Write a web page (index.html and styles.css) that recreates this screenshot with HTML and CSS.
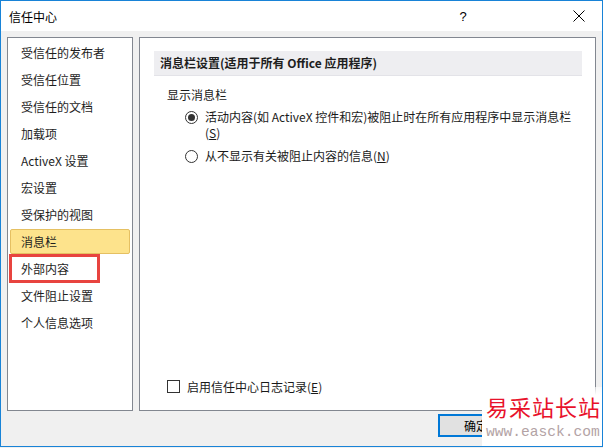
FILE: index.html
```html
<!DOCTYPE html>
<html>
<head>
<meta charset="utf-8">
<link rel="stylesheet" href="styles.css">
</head>
<body>
<div class="window">
  <div class="titlebar">
    <div class="title">信任中心</div>
    <div class="tb-btn help">?</div>
    <div class="tb-btn close">
      <svg width="12" height="12" viewBox="0 0 12 12"><path d="M0.5 0.5 L11.5 11.5 M11.5 0.5 L0.5 11.5" stroke="#000" stroke-width="1" fill="none"/></svg>
    </div>
  </div>
  <div class="main">
    <div class="nav">
      <div class="nav-item">受信任的发布者</div>
      <div class="nav-item">受信任位置</div>
      <div class="nav-item">受信任的文档</div>
      <div class="nav-item">加载项</div>
      <div class="nav-item">ActiveX 设置</div>
      <div class="nav-item">宏设置</div>
      <div class="nav-item">受保护的视图</div>
      <div class="nav-item active">消息栏</div>
      <div class="nav-item marked">外部内容<span class="redbox"></span></div>
      <div class="nav-item">文件阻止设置</div>
      <div class="nav-item">个人信息选项</div>
    </div>
    <div class="panel">
      <div class="section-head">消息栏设置(适用于所有 Office 应用程序)</div>
      <div class="group-label">显示消息栏</div>
      <div class="opt first">
        <span class="radio checked"></span>
        <span class="opt-text">活动内容(如 ActiveX 控件和宏)被阻止时在所有应用程序中显示消息栏<br>(<u>S</u>)</span>
      </div>
      <div class="opt second">
        <span class="radio"></span>
        <span class="opt-text">从不显示有关被阻止内容的信息(<u>N</u>)</span>
      </div>
      <div class="check-row">
        <span class="checkbox"></span>
        <span class="opt-text">启用信任中心日志记录(<u>E</u>)</span>
      </div>
    </div>
  </div>
  <div class="footer">
    <div class="btn">确定</div>
  </div>
  <div class="watermark">
    <div class="wm-cn">易采站长站</div>
    <div class="wm-en">www.easck.com</div>
  </div>
</div>
</body>
</html>
```
FILE: styles.css
```css
* { box-sizing: border-box; }
html, body { margin: 0; padding: 0; background: #f0f0f0; }
body {
  font-family: "Noto Sans CJK SC", "Noto Sans", sans-serif;
  font-size: 12px;
  color: #1a1a1a;
}
.window {
  position: relative;
  width: 603px;
  height: 447px;
  border: 1px solid #1883d7;
  background: #f0f0f0;
  display: flex;
  flex-direction: column;
  overflow: hidden;
}
.titlebar {
  height: 30px;
  background: #fff;
  display: flex;
  align-items: center;
}
.title {
  flex: 1;
  padding-left: 8px;
  font-size: 12px;
  color: #000;
}
.tb-btn {
  width: 46px;
  height: 30px;
  display: flex;
  align-items: center;
  justify-content: center;
  color: #000;
}
.help { font-family: "Liberation Sans", sans-serif; font-size: 13px; margin-right: 70px; }
.close { margin-right: 0; }
.main {
  height: 380px;
  display: flex;
  gap: 6px;
  padding: 6px 6px 0 6px;
}
.nav {
  position: relative;
  width: 126px;
  height: 374px;
  background: #fff;
  border: 1px solid #828790;
  padding-top: 2px;
}
.nav-item {
  position: relative;
  height: 25px;
  line-height: 25px;
  margin: 0 2px 2px 2px;
  padding-left: 11px;
  color: #1e1e1e;
  white-space: nowrap;
}
.nav-item.active {
  background: #fde38c;
  border: 1px solid #e5c062;
  border-radius: 2px;
  line-height: 23px;
  padding-left: 10px;
}
.redbox {
  position: absolute;
  left: -1px;
  top: -2px;
  width: 91px;
  height: 29px;
  border: 3px solid #e8443f;
}
.panel {
  width: 457px;
  height: 374px;
  background: #fff;
  border: 1px solid #828790;
  padding: 13px 13px 15px 14px;
  display: flex;
  flex-direction: column;
}
.section-head {
  height: 25px;
  line-height: 24px;
  background: #eeeef1;
  border-bottom: 1px solid #e3e3e8;
  padding-left: 6px;
  font-weight: bold;
  color: #1e1e1e;
}
.group-label {
  margin-top: 10px;
  line-height: 17px;
  padding-left: 13px;
}
.opt {
  display: flex;
  align-items: flex-start;
  padding-left: 31px;
  line-height: 16px;
}
.opt.first { margin-top: 6px; }
.opt.second { margin-top: 7px; }
.opt-text { margin-left: 7px; }
.radio {
  flex: none;
  width: 13px;
  height: 13px;
  border: 1px solid #333;
  border-radius: 50%;
  margin-top: 2px;
  display: flex;
  align-items: center;
  justify-content: center;
}
.radio.checked::after {
  content: "";
  width: 7px;
  height: 7px;
  border-radius: 50%;
  background: #333;
}
.check-row {
  margin-top: auto;
  display: flex;
  align-items: center;
  padding-left: 13px;
  line-height: 17px;
}
.checkbox {
  flex: none;
  width: 13px;
  height: 13px;
  border: 1px solid #333;
  background: #fff;
}
.footer {
  flex: 1;
  padding: 3px 0 0 437px;
}
.btn {
  width: 76px;
  height: 23px;
  border: 2px solid #0078d7;
  background: #e1e1e1;
  text-align: center;
  line-height: 19px;
  color: #000;
}
.watermark {
  position: absolute;
  left: 481px;
  top: 386px;
  width: 122px;
  height: 62px;
  background: linear-gradient(to bottom, rgba(255,255,255,0.6) 0, #fff 8px);
  padding: 6px 0 0 4px;
}
.wm-cn {
  font-family: "Noto Sans CJK SC", serif;
  font-size: 22px;
  line-height: 26px;
  color: #e8122b;
  letter-spacing: 1px;
  white-space: nowrap;
}
.wm-en {
  font-family: "Liberation Mono", monospace;
  font-size: 14.6px;
  line-height: 18px;
  margin-top: 4px;
  color: #b3a3a5;
  white-space: nowrap;
}
```
